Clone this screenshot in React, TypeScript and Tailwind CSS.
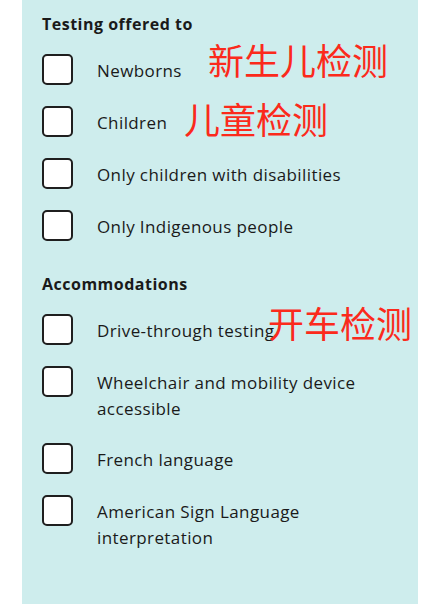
const groups = [
  {
    title: "Testing offered to",
    items: ["Newborns", "Children", "Only children with disabilities", "Only Indigenous people"],
  },
  {
    title: "Accommodations",
    items: [
      "Drive-through testing",
      "Wheelchair and mobility device accessible",
      "French language",
      "American Sign Language interpretation",
    ],
  },
];

function Row({ label }: { label: string }) {
  return (
    <label className="flex items-start gap-6">
      <span className="w-[31px] h-[31px] shrink-0 rounded-[5px] border-2 border-[#1f1f1f] bg-white" />
      <span className="pt-[4px] text-[17px] leading-[26px] tracking-[0.4px] text-[#1a1a1a]">{label}</span>
    </label>
  );
}

export default function App() {
  return (
    <div className="min-h-[604px] bg-white" style={{ fontFamily: '"Open Sans", "Noto Sans", sans-serif' }}>
      <div className="relative ml-[22px] w-[396px] min-h-[604px] bg-[#ceeded] pl-5 pr-4 pt-[11px]">
        {groups.map((g, i) => (
          <fieldset key={g.title} className={i > 0 ? "mt-[30px]" : ""}>
            <legend className="text-[16px] font-bold leading-[26px] tracking-[0.5px] text-[#1a1a1a]">{g.title}</legend>
            <div className="mt-[17px] flex flex-col gap-[21px]">
              {g.items.map((it) => (
                <Row key={it} label={it} />
              ))}
            </div>
          </fieldset>
        ))}

        {/* annotations */}
        <span
          className="absolute left-[186px] top-[38px] text-[36px] leading-[42px] text-[#fb2a1c]"
          style={{ fontFamily: '"Noto Sans CJK SC", sans-serif' }}
        >
          新生儿检测
        </span>
        <span
          className="absolute left-[162px] top-[97px] text-[36px] leading-[42px] text-[#fb2a1c]"
          style={{ fontFamily: '"Noto Sans CJK SC", sans-serif' }}
        >
          儿童检测
        </span>
        <span
          className="absolute left-[246px] top-[301px] text-[36px] leading-[42px] text-[#fb2a1c]"
          style={{ fontFamily: '"Noto Sans CJK SC", sans-serif' }}
        >
          开车检测
        </span>
      </div>
    </div>
  );
}
